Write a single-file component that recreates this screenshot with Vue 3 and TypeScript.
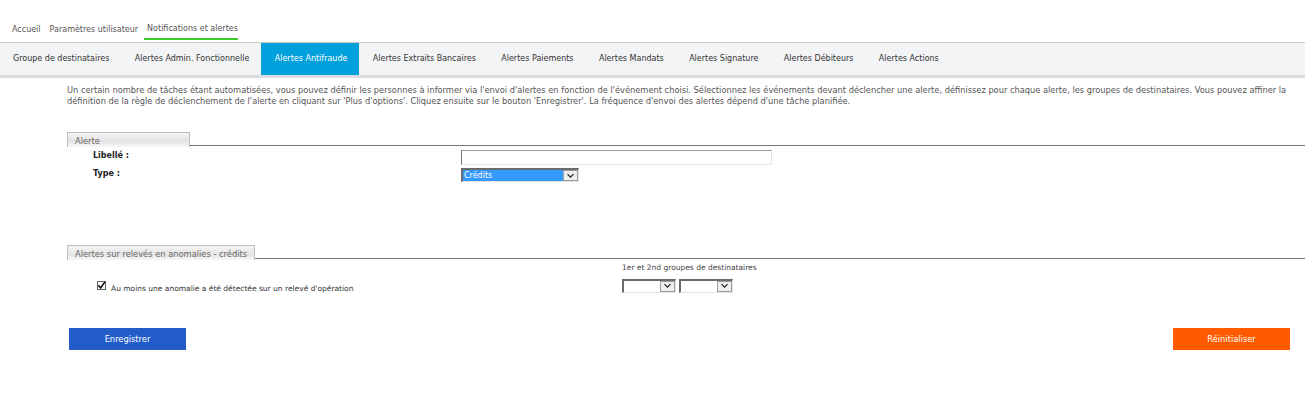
<script setup lang="ts">
const topTabs = ['Accueil', 'Paramètres utilisateur', 'Notifications et alertes']
const subTabs = ['Groupe de destinataires', 'Alertes Admin. Fonctionnelle', 'Alertes Antifraude', 'Alertes Extraits Bancaires', 'Alertes Paiements', 'Alertes Mandats', 'Alertes Signature', 'Alertes Débiteurs', 'Alertes Actions']
</script>

<template>
  <div class="page">
    <nav class="top">
      <a v-for="(t, i) in topTabs" :key="t" class="top-item" :class="{ on: i === 2 }">{{ t }}</a>
    </nav>
    <nav class="sub">
      <a v-for="(t, i) in subTabs" :key="t" class="sub-item" :class="{ on: i === 2 }">{{ t }}</a>
    </nav>
    <main class="main">
      <p class="intro">Un certain nombre de tâches étant automatisées, vous pouvez définir les personnes à informer via l'envoi d'alertes en fonction de l'événement choisi. Sélectionnez les événements devant déclencher une alerte, définissez pour chaque alerte, les groupes de destinataires. Vous pouvez affiner la définition de la règle de déclenchement de l'alerte en cliquant sur 'Plus d'options'. Cliquez ensuite sur le bouton 'Enregistrer'. La fréquence d'envoi des alertes dépend d'une tâche planifiée.</p>

      <section class="sec sec-one">
        <div class="legend-row"><div class="legend w1">Alerte</div></div>
        <div class="field f1">
          <label class="lab">Libellé :</label>
          <input class="text" type="text" />
        </div>
        <div class="field f2">
          <label class="lab">Type :</label>
          <div class="sel big">
            <span class="val">Crédits</span>
            <span class="arrow"><svg width="9" height="6" viewBox="0 0 9 6"><path d="M1.5 1.2l3 3 3-3" fill="none" stroke="#222" stroke-width="1.2"/></svg></span>
          </div>
        </div>
      </section>

      <section class="sec sec-two">
        <div class="legend-row"><div class="legend w2">Alertes sur relevés en anomalies - crédits</div></div>
        <div class="dest-head">1er et 2nd groupes de destinataires</div>
        <div class="alert-row">
          <span class="check"><svg width="9" height="9" viewBox="0 0 10 10"><path d="M1.5 4.8l2.5 3L8.8 1" fill="none" stroke="#111" stroke-width="1.8"/></svg></span>
          <span class="alert-label">Au moins une anomalie a été détectée sur un relevé d'opération</span>
          <div class="pair">
            <div class="sel small" v-for="n in 2" :key="n">
              <span class="val"></span>
              <span class="arrow"><svg width="9" height="6" viewBox="0 0 9 6"><path d="M1.5 1.2l3 3 3-3" fill="none" stroke="#222" stroke-width="1.2"/></svg></span>
            </div>
          </div>
        </div>
      </section>

      <div class="actions">
        <button class="btn blue" type="button">Enregistrer</button>
        <button class="btn orange" type="button">Réinitialiser</button>
      </div>
    </main>
  </div>
</template>

<style>
html, body { background: #fff; }
</style>

<style scoped>
.page {
  width: 1305px;
  height: 416px;
  overflow: hidden;
  font-family: "DejaVu Sans", Verdana, sans-serif;
  font-size: 8px;
  color: #444;
}
.top {
  display: flex;
  height: 43px;
  padding: 0 0 1px 12px;
  box-sizing: border-box;
  border-bottom: 1px solid #c9cbc9;
  align-items: flex-end;
}
.top-item {
  height: 18px;
  line-height: 13px;
  margin-right: 9px;
  color: #555;
  white-space: nowrap;
  box-sizing: border-box;
}
.top-item.on {
  margin-left: -3px;
  padding: 0 0 0 3px;
  border-bottom: 2px solid #3ccb2f;
  height: 18px;
  margin-right: 0;
  margin-bottom: 1px;
}
.sub {
  display: flex;
  height: 35px;
  box-sizing: border-box;
  background: #f3f4f6;
  border-bottom: 3px solid #dcdde0;
}
.sub-item {
  height: 32px;
  line-height: 32px;
  padding: 0 11.4px 0 14px;
  white-space: nowrap;
  color: #333;
}
.sub-item:first-child { padding-left: 13px; }
.sub-item.on {
  background: #00a0dc;
  color: #fff;
}
.main {
  padding: 7px 0 0 67px;
}
.intro {
  margin: 0;
  width: 1228px;
  line-height: 10.5px;
  font-size: 8.27px;
  color: #555;
}
.sec-one {
  margin-top: 26px;
  height: 113px;
  margin-right: 0;
}
.legend-row {
  border-bottom: 1px solid #777;
  height: 14px;
  box-sizing: border-box;
}
.legend {
  height: 15px;
  box-sizing: border-box;
  border: 1px solid #b3c3c3;
  border-bottom: 0;
  background: linear-gradient(#f4f4f4, #e4e4e4 60%, #f8f8f8);
  padding: 3px 0 0 7px;
  line-height: 11px;
  font-size: 8.3px;
  color: #666;
}
.w1 { width: 123px; }
.w2 { width: 188px; }
.field {
  display: grid;
  grid-template-columns: 394px auto;
  justify-content: start;
}
.f1 { margin-top: 4px; height: 17px; }
.f2 { margin-top: 1px; }
.lab {
  padding-left: 26px;
  font-weight: 700;
  color: #222;
  line-height: 12px;
}
.text {
  width: 311px;
  height: 15px;
  box-sizing: border-box;
  margin: 0;
  border: 1px solid #e4e4e4;
  border-top-color: #999;
  border-left-color: #777;
  background: #fff;
}
.sel {
  display: flex;
  height: 14px;
  box-sizing: border-box;
  border: 1px solid #e2e2e2;
  border-top: 2px solid #6b6b6b;
  border-left: 2px solid #6b6b6b;
  background: #fff;
}
.big { width: 118px; }
.big .val { flex: 1; background: #3399ff; color: #fff; padding-left: 1px; line-height: 11px; }
.small { width: 54px; }
.small .val { flex: 1; }
.arrow {
  width: 15px;
  display: flex;
  align-items: center;
  justify-content: center;
  background: #efefef;
  box-shadow: inset 0 0 0 1px #9c9c9c;
}
.dest-head {
  margin: 3px 0 0 555px;
  line-height: 11px;
  font-size: 7.5px;
  color: #444;
}
.alert-row {
  display: flex;
  align-items: center;
  margin-top: 5px;
  height: 15px;
}
.check {
  width: 9px;
  height: 9px;
  box-sizing: border-box;
  margin-left: 30px;
  border: 1px solid #666;
  display: flex;
  align-items: center;
  justify-content: center;
}
.check svg { display: block; flex: none; }
.alert-label {
  margin-left: 5px;
  width: 511px;
  font-size: 7.5px;
  color: #333;
  white-space: nowrap;
  padding-top: 5px;
}
.pair {
  display: flex;
  gap: 3px;
}
.actions {
  display: flex;
  justify-content: space-between;
  margin-top: 35px;
  padding: 0 15px 0 2px;
}
.btn {
  width: 117px;
  height: 22px;
  border: 0;
  color: #fff;
  font: inherit;
  font-size: 8.3px;
  padding: 0;
}
.blue { background: #235bc8; }
.orange { background: #ff5a00; }
</style>
